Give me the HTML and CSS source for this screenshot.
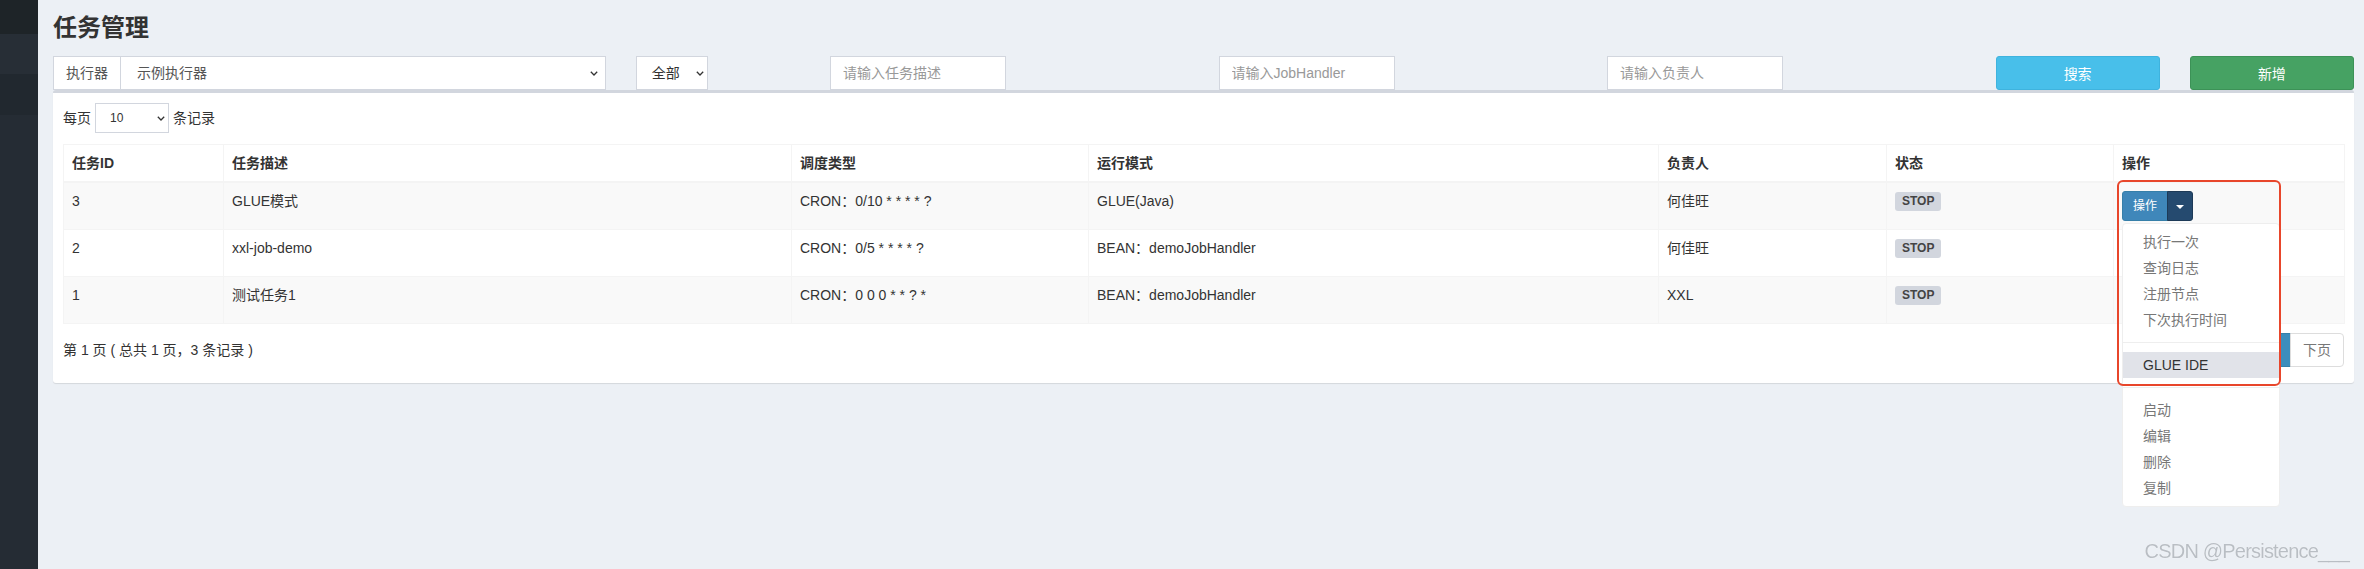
FILE: index.html
```html
<!DOCTYPE html>
<html lang="zh-CN">
<head>
    <meta charset="UTF-8">
    <meta name="viewport" content="width=device-width, initial-scale=1.0">
    <title>任务管理</title>
    <link rel="stylesheet" href="styles.css">
</head>
<body>
    <div class="wrapper">
        <!-- Left menu (collapsed) -->
        <aside class="sidebar">
            <div class="sidebar-logo"></div>
            <div class="sidebar-item"></div>
            <div class="sidebar-item sidebar-item-dark"></div>
        </aside>

        <main class="content">
            <h1 class="page-title">任务管理</h1>

            <!-- Search bar -->
            <div class="filter-row">
                <div class="col col-3">
                    <div class="input-group">
                        <span class="addon">执行器</span>
                        <div class="select select-group">
                            <span>示例执行器</span>
                            <svg class="chevron" width="8" height="5" viewBox="0 0 8 5"><polyline points="0.8,0.8 4,4 7.2,0.8" /></svg>
                        </div>
                    </div>
                </div>
                <div class="col col-1">
                    <div class="select select-status">
                        <span>全部</span>
                        <svg class="chevron" width="8" height="5" viewBox="0 0 8 5"><polyline points="0.8,0.8 4,4 7.2,0.8" /></svg>
                    </div>
                </div>
                <div class="col col-2"><input class="form-input" type="text" placeholder="请输入任务描述"></div>
                <div class="col col-2"><input class="form-input" type="text" placeholder="请输入JobHandler"></div>
                <div class="col col-2"><input class="form-input" type="text" placeholder="请输入负责人"></div>
                <div class="col col-1"><button class="btn btn-search">搜索</button></div>
                <div class="col col-1"><button class="btn btn-add">新增</button></div>
            </div>

            <div class="box">
                <div class="length-row">
                    <span>每页</span>
                    <div class="select select-length">
                        <span>10</span>
                        <svg class="chevron" width="8" height="5" viewBox="0 0 8 5"><polyline points="0.8,0.8 4,4 7.2,0.8" /></svg>
                    </div>
                    <span>条记录</span>
                </div>

                <table class="job-table">
                    <colgroup>
                        <col class="w-id">
                        <col class="w-desc">
                        <col class="w-cron">
                        <col class="w-mode">
                        <col class="w-owner">
                        <col class="w-status">
                        <col class="w-action">
                    </colgroup>
                    <thead>
                        <tr>
                            <th>任务ID</th>
                            <th>任务描述</th>
                            <th>调度类型</th>
                            <th>运行模式</th>
                            <th>负责人</th>
                            <th>状态</th>
                            <th>操作</th>
                        </tr>
                    </thead>
                    <tbody>
                        <tr>
                            <td>3</td>
                            <td>GLUE模式</td>
                            <td>CRON：0/10 * * * * ?</td>
                            <td>GLUE(Java)</td>
                            <td>何佳旺</td>
                            <td><span class="label">STOP</span></td>
                            <td>
                                <div class="btn-group open">
                                    <button class="btn-op">操作</button><button class="btn-op btn-toggle"><span class="caret"></span></button>
                                    <ul class="dropdown-menu">
                                        <li><a>执行一次</a></li>
                                        <li><a>查询日志</a></li>
                                        <li><a>注册节点</a></li>
                                        <li><a>下次执行时间</a></li>
                                        <li class="divider"></li>
                                        <li class="hover"><a>GLUE IDE</a></li>
                                        <li class="divider"></li>
                                        <li><a>启动</a></li>
                                        <li><a>编辑</a></li>
                                        <li><a>删除</a></li>
                                        <li><a>复制</a></li>
                                    </ul>
                                    <div class="highlight"></div>
                                </div>
                            </td>
                        </tr>
                        <tr>
                            <td>2</td>
                            <td>xxl-job-demo</td>
                            <td>CRON：0/5 * * * * ?</td>
                            <td>BEAN：demoJobHandler</td>
                            <td>何佳旺</td>
                            <td><span class="label">STOP</span></td>
                            <td></td>
                        </tr>
                        <tr>
                            <td>1</td>
                            <td>测试任务1</td>
                            <td>CRON：0 0 0 * * ? *</td>
                            <td>BEAN：demoJobHandler</td>
                            <td>XXL</td>
                            <td><span class="label">STOP</span></td>
                            <td></td>
                        </tr>
                    </tbody>
                </table>

                <div class="table-footer">
                    <span class="info">第 1 页 ( 总共 1 页，3 条记录 )</span>
                    <ul class="pagination">
                        <li><a>上页</a></li>
                        <li class="active"><a>1</a></li>
                        <li><a>下页</a></li>
                    </ul>
                </div>
            </div>
        </main>
    </div>

    <div class="watermark">CSDN @Persistence___</div>
</body>
</html>
```

FILE: styles.css
```css
body {
    margin: 0;
    padding: 0;
    font-family: "Liberation Sans", "Noto Sans CJK SC", sans-serif;
    font-size: 14px;
    line-height: 20px;
    color: #333;
    background-color: #ecf0f5;
    overflow: hidden;
}
.wrapper {
    display: flex;
    min-height: 100vh;
}

/* Sidebar */
.sidebar {
    width: 38px;
    flex-shrink: 0;
    background-color: #252c34;
}
.sidebar-logo {
    height: 34px;
    background-color: #1e2428;
}
.sidebar-item {
    height: 40px;
    background-color: #272e36;
}
.sidebar-item-dark {
    height: 41px;
    background-color: #21282f;
}

/* Content */
.content {
    flex: 1;
    padding: 15px 10px 0 15px;
    min-width: 0;
}
.page-title {
    margin: 0;
    font-size: 24px;
    line-height: 26px;
    font-weight: bold;
    color: #333;
}

/* Filter row: 12 column grid */
.filter-row {
    display: grid;
    grid-template-columns: repeat(12, 1fr);
    margin: 15px -15px 0 -15px;
    height: 34px;
}
.col {
    padding: 0 15px;
    min-width: 0;
}
.col-1 { grid-column: span 1; }
.col-2 { grid-column: span 2; }
.col-3 { grid-column: span 3; }

.input-group {
    display: flex;
    height: 34px;
}
.addon {
    display: flex;
    align-items: center;
    padding: 0 12px;
    border: 1px solid #d2d6de;
    border-right: 0;
    background: #fff;
    color: #555;
}
.select {
    box-sizing: border-box;
    display: flex;
    align-items: center;
    justify-content: space-between;
    height: 34px;
    border: 1px solid #d2d6de;
    background: #fff;
    color: #555;
}
.select-group {
    flex: 1;
    padding: 0 7px 0 16px;
}
.select-status {
    width: 72px;
    padding: 0 3px 0 15px;
    color: #333;
}
.chevron polyline {
    fill: none;
    stroke: #333;
    stroke-width: 1.3;
}
.form-input {
    box-sizing: border-box;
    width: 176px;
    height: 34px;
    padding: 6px 12px;
    border: 1px solid #d2d6de;
    border-radius: 0;
    font-family: inherit;
    font-size: 14px;
    color: #555;
    background: #fff;
    outline: none;
}
.form-input::placeholder {
    color: #999;
}
.btn {
    width: 100%;
    height: 34px;
    border: 1px solid;
    border-radius: 3px;
    font-family: inherit;
    font-size: 14px;
    color: #fff;
    cursor: pointer;
}
.btn-search {
    background-color: #48bfea;
    border-color: #3fb3de;
}
.btn-add {
    background-color: #46a263;
    border-color: #3c9257;
}

/* Box with table */
.box {
    background: #fff;
    border-top: 3px solid #d2d6de;
    border-radius: 3px;
    box-shadow: 0 1px 1px rgba(0, 0, 0, 0.1);
    padding: 10px;
}
.length-row {
    display: flex;
    align-items: center;
    gap: 4px;
    height: 30px;
}
.select-length {
    width: 74px;
    height: 30px;
    padding: 0 3px 0 14px;
    font-size: 12px;
    color: #333;
}
.job-table {
    width: 100%;
    margin-top: 11px;
    border-collapse: collapse;
    table-layout: fixed;
}
.w-id { width: 160px; }
.w-desc { width: 568px; }
.w-cron { width: 297px; }
.w-mode { width: 570px; }
.w-owner { width: 228px; }
.w-status { width: 227px; }
.w-action { width: 231px; }
.job-table th,
.job-table td {
    border: 1px solid #f4f4f4;
    padding: 8px;
    text-align: left;
    vertical-align: top;
    white-space: nowrap;
}
.job-table th {
    font-weight: bold;
    border-bottom-width: 2px;
}
.job-table tbody tr {
    height: 47px;
}
.job-table tbody tr:nth-child(odd) {
    background-color: #f9f9f9;
}
.label {
    display: inline-block;
    padding: 3px 7px 3px;
    border-radius: 3px;
    background-color: #d2d6de;
    color: #444;
    font-size: 12px;
    font-weight: bold;
    line-height: 13px;
    vertical-align: 1px;
}

/* Split button + menu */
.btn-group {
    position: relative;
    display: inline-flex;
}
.btn-op {
    height: 30px;
    padding: 5px 10px;
    border: 1px solid #367fa9;
    border-radius: 3px 0 0 3px;
    background-color: #3f87ba;
    color: #fff;
    font-family: inherit;
    font-size: 12px;
    line-height: 18px;
}
.btn-toggle {
    margin-left: -1px;
    padding: 5px 8px;
    border-radius: 0 3px 3px 0;
    background-color: #254a6f;
    border-color: #1d3a57;
}
.caret {
    display: inline-block;
    width: 0;
    height: 0;
    border-top: 4px solid #fff;
    border-left: 4px solid transparent;
    border-right: 4px solid transparent;
    vertical-align: middle;
}
.dropdown-menu {
    position: absolute;
    top: 32px;
    left: 0;
    z-index: 10;
    box-sizing: border-box;
    width: 158px;
    margin: 0;
    padding: 5px 0;
    list-style: none;
    background: #fff;
    border: 1px solid #eee;
    border-radius: 4px;
}
.dropdown-menu a {
    display: block;
    padding: 3px 20px;
    color: #777;
}
.dropdown-menu .hover a {
    background-color: #e1e3e9;
    color: #333;
}
.dropdown-menu .divider {
    height: 1px;
    margin: 9px 0;
    background-color: #eee;
}
.highlight {
    position: absolute;
    left: -5px;
    top: -11px;
    z-index: 11;
    box-sizing: border-box;
    width: 164px;
    height: 206px;
    border: 2.5px solid #e8462b;
    border-radius: 6px;
}

/* Footer with info and paging */
.table-footer {
    display: flex;
    justify-content: space-between;
    align-items: center;
    margin: 9px 0 6px;
}
.pagination {
    display: flex;
    margin: 0;
    padding: 0;
    list-style: none;
}
.pagination a {
    display: block;
    padding: 6px 12px;
    margin-left: -1px;
    border: 1px solid #ddd;
    color: #777;
    background: #fff;
}
.pagination li:first-child a {
    border-radius: 4px 0 0 4px;
}
.pagination li:last-child a {
    border-radius: 0 4px 4px 0;
}
.pagination .active a {
    background-color: #3c8dbc;
    border-color: #367fa9;
    color: #fff;
}

.watermark {
    position: fixed;
    right: 15px;
    bottom: 6px;
    font-size: 20px;
    line-height: 24px;
    letter-spacing: -0.8px;
    color: #b9bec4;
    text-shadow: 0 0 1px #fff;
}
```
